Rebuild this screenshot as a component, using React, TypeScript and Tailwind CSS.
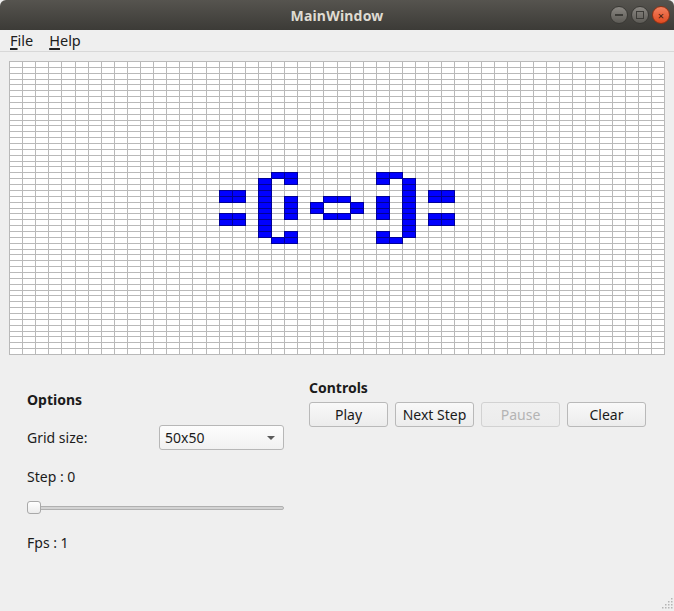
import React from "react";

const ALIVE = new Set<string>();
const add = (r: number, c: number) => ALIVE.add(`${r},${c}`);
for (const r of [22, 23, 26, 27]) for (const c of [16, 17, 32, 33]) add(r, c);
for (let r = 20; r <= 29; r++) {
  add(r, 19);
  add(r, 30);
}
add(19, 20); add(19, 21); add(20, 21); add(29, 21); add(30, 20); add(30, 21);
add(19, 28); add(19, 29); add(20, 28); add(29, 28); add(30, 28); add(30, 29);
for (let r = 23; r <= 26; r++) {
  add(r, 21);
  add(r, 28);
}
add(23, 24); add(23, 25); add(26, 24); add(26, 25);
add(24, 23); add(25, 23); add(24, 26); add(25, 26);

const cells: { key: string; alive: boolean }[] = [];
for (let r = 0; r < 50; r++)
  for (let c = 0; c < 50; c++) cells.push({ key: `${r},${c}`, alive: ALIVE.has(`${r},${c}`) });

function QtButton({ label, disabled }: { label: string; disabled?: boolean }) {
  return (
    <div
      className={
        "w-[79px] h-[25px] rounded-[3px] border flex items-center justify-center text-[14px] bg-gradient-to-b " +
        (disabled
          ? "border-[#d2d2d2] text-[#b4b4b4] from-[#f0f0f0] to-[#ececec]"
          : "border-[#b9b9b9] text-[#1a1a1a] from-[#f9f9f9] to-[#ececec]")
      }
    >
      {label}
    </div>
  );
}

export default function App() {
  return (
    <div
      className="relative w-[674px] h-[611px] bg-[#efefef] flex flex-col overflow-hidden text-[#1b1b1b]"
      style={{ fontFamily: '"Noto Sans", "Open Sans", sans-serif' }}
    >
      {/* Title bar */}
      <div className="relative h-[30px] bg-gradient-to-b from-[#56544f] to-[#3c3b37] flex items-center justify-center rounded-t-[6px]">
        <span className="text-[14px] font-bold text-[#dfdbd2] tracking-[0.2px]">MainWindow</span>
        <div className="absolute right-[4px] top-[6px] flex gap-[3px]">
          <div className="w-[18px] h-[18px] rounded-full bg-gradient-to-b from-[#8a8782] to-[#5d5b56] border border-[#3a3935] flex items-center justify-center">
            <div className="w-[8px] h-[1.5px] bg-[#3c3b37]" />
          </div>
          <div className="w-[18px] h-[18px] rounded-full bg-gradient-to-b from-[#8a8782] to-[#5d5b56] border border-[#3a3935] flex items-center justify-center">
            <div className="w-[8px] h-[8px] border border-[#3c3b37]" />
          </div>
          <div className="w-[18px] h-[18px] rounded-full bg-gradient-to-b from-[#f3805e] to-[#df4a1e] border border-[#8e3215] flex items-center justify-center text-[#3c1a0c] text-[11px] leading-none">
            ×
          </div>
        </div>
      </div>

      {/* Menu bar */}
      <div className="h-[22px] border-b border-[#d8d8d8] flex items-center pl-[10px] gap-[16px] text-[14.5px] text-[#202020]">
        <span>
          <span className="underline decoration-[2px] underline-offset-[2px]">F</span>ile
        </span>
        <span>
          <span className="underline decoration-[2px] underline-offset-[2px]">H</span>elp
        </span>
      </div>

      {/* Grid */}
      <div className="ml-[9px] mt-[9px] w-[656px] h-[294px] bg-[#b9b9b9] p-px grid grid-cols-[repeat(50,minmax(0,1fr))] grid-rows-[repeat(50,minmax(0,1fr))] gap-px">
        {cells.map((cell) => (
          <div
            key={cell.key}
            className={cell.alive ? "bg-[#0000ff] outline outline-1 outline-[#000096]" : "bg-white"}
          />
        ))}
      </div>

      {/* Bottom panel */}
      <div className="flex text-[14px] leading-[20px]">
        <div className="ml-[27px] w-[257px] flex flex-col">
          <div className="mt-[35px] font-bold">Options</div>
          <div className="mt-[15px] flex items-center justify-between h-[25px]">
            <span>Grid size:</span>
            <div className="w-[125px] h-[25px] rounded-[3px] border border-[#b7b7b7] bg-gradient-to-b from-[#fdfdfd] to-[#f1f1f1] flex items-center justify-between pl-[5px] pr-[8px]">
              <span>50x50</span>
              <div className="w-0 h-0 border-l-[4px] border-r-[4px] border-t-[4px] border-l-transparent border-r-transparent border-t-[#5a5a5a]" />
            </div>
          </div>
          <div className="mt-[17px]">Step : 0</div>
          <div className="mt-[14px] relative h-[13px] flex items-center">
            <div className="w-full h-[4px] rounded-full bg-[#d3d3d3] border border-[#b0b0b0]" />
            <div className="absolute left-0 top-0 w-[14px] h-[13px] rounded-[3px] border border-[#a9a9a9] bg-gradient-to-b from-[#ffffff] to-[#ececec]" />
          </div>
          <div className="mt-[19px]">Fps : 1</div>
        </div>
        <div className="ml-[25px] flex flex-col">
          <div className="mt-[23px] font-bold">Controls</div>
          <div className="mt-[4px] flex gap-[7px]">
            <QtButton label="Play" />
            <QtButton label="Next Step" />
            <QtButton label="Pause" disabled />
            <QtButton label="Clear" />
          </div>
        </div>
      </div>

      {/* Size grip */}
      <svg className="absolute right-[1px] bottom-[1px]" width="12" height="12" viewBox="0 0 12 12">
        {[
          [10, 0], [7, 3], [10, 3], [4, 6], [7, 6], [10, 6], [1, 9], [4, 9], [7, 9], [10, 9],
        ].map(([x, y], i) => (
          <rect key={i} x={x} y={y} width="1.5" height="1.5" fill="#b5b5b5" />
        ))}
      </svg>
    </div>
  );
}
